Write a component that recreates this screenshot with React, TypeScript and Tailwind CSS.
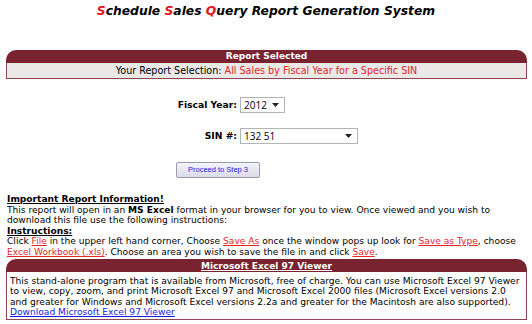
import { type ReactNode } from "react";

const verdana = { fontFamily: '"DejaVu Sans", Verdana, sans-serif' };

function Red({ children, link }: { children: ReactNode; link?: boolean }) {
  return <span className={link ? "text-[#e3262c] underline" : "text-[#e3262c]"}>{children}</span>;
}

function FakeSelect({ value, width }: { value: string; width: string }) {
  return (
    <div
      className={`${width} h-[16px] flex items-center justify-between border border-[#b4b4b4] bg-white pl-[3px] pr-[5px] text-[10px] text-black`}
      style={{ fontFamily: '"Open Sans", "Liberation Sans", sans-serif' }}
    >
      <span className="leading-none">{value}</span>
      <svg width="7" height="4" viewBox="0 0 7 4">
        <path d="M0 0h7L3.5 4z" fill="#222" />
      </svg>
    </div>
  );
}

export default function App() {
  return (
    <div className="w-[532px] h-[324px] bg-white overflow-hidden text-black" style={verdana}>
      <h1 className="pt-[3px] text-center text-[12.3px] leading-[16px] font-bold italic">
        <span className="text-[#e3131b]">S</span>chedule <span className="text-[#e3131b]">S</span>ales{" "}
        <span className="text-[#e3131b]">Q</span>uery Report Generation System
      </h1>

      {/* report selected panel */}
      <div className="mt-[31px] ml-[6px] w-[521px]">
        <div className="h-[13px] rounded-t-[10px] bg-[#7a2330] text-center text-[9px] font-bold leading-[13px] text-white">
          Report Selected
        </div>
        <div className="h-[16px] border border-t-0 border-[#8e4650] bg-[#ebe8e8] text-center text-[9.6px] leading-[15px]">
          Your Report Selection: <Red>All Sales by Fiscal Year for a Specific SIN</Red>
        </div>
      </div>

      {/* form */}
      <div className="mt-[18px] grid grid-cols-[237px_1fr] items-center gap-x-[3px] gap-y-[15px]">
        <div className="text-right text-[9.2px] font-bold">Fiscal Year:</div>
        <FakeSelect value="2012" width="w-[45px]" />
        <div className="text-right text-[9.2px] font-bold">SIN #:</div>
        <FakeSelect value="132 51" width="w-[118px]" />
      </div>
      <div className="mt-[11px] pl-[176px]">
        <button
          className="w-[84px] h-[16px] rounded-[2px] border border-[#9a9aa8] bg-gradient-to-b from-[#f4f4fb] to-[#d9dbe8] text-[7.5px] leading-none text-[#2424d8]"
          style={{ fontFamily: '"Liberation Sans", Arial, sans-serif' }}
        >
          Proceed to Step 3
        </button>
      </div>

      {/* info */}
      <div className="mt-[15px] px-[7px] text-[9.1px] leading-[10.6px]">
        <div className="font-bold underline">Important Report Information!</div>
        <div>
          This report will open in an <b>MS Excel</b> format in your browser for you to view. Once viewed and you wish to
          download this file use the following instructions:
        </div>
        <div className="font-bold underline">Instructions:</div>
        <div>
          Click <Red link>File</Red> in the upper left hand corner, Choose <Red link>Save As</Red> once the window pops
          up look for <Red link>Save as Type</Red>, choose <Red link>Excel Workbook (.xls)</Red>. Choose an area you
          wish to save the file in and click <Red link>Save</Red>.
        </div>
      </div>

      {/* viewer panel */}
      <div className="mt-[1px] ml-[6px] w-[521px]">
        <div className="h-[13px] rounded-t-[10px] bg-[#7a2330] text-center text-[9px] font-bold leading-[14px] text-white">
          <span className="underline">Microsoft Excel 97 Viewer</span>
        </div>
        <div className="border border-t-0 border-[#8e4650] px-[3px] pt-[4px] pb-[1px] text-[9.1px] leading-[10.6px]">
          This stand-alone program that is available from Microsoft, free of charge. You can use Microsoft Excel 97
          Viewer to view, copy, zoom, and print Microsoft Excel 97 and Microsoft Excel 2000 files (Microsoft Excel
          versions 2.0 and greater for Windows and Microsoft Excel versions 2.2a and greater for the Macintosh are also
          supported).
          <br />
          <span className="text-[#1a1ae0] underline">Download Microsoft Excel 97 Viewer</span>
        </div>
      </div>
    </div>
  );
}
